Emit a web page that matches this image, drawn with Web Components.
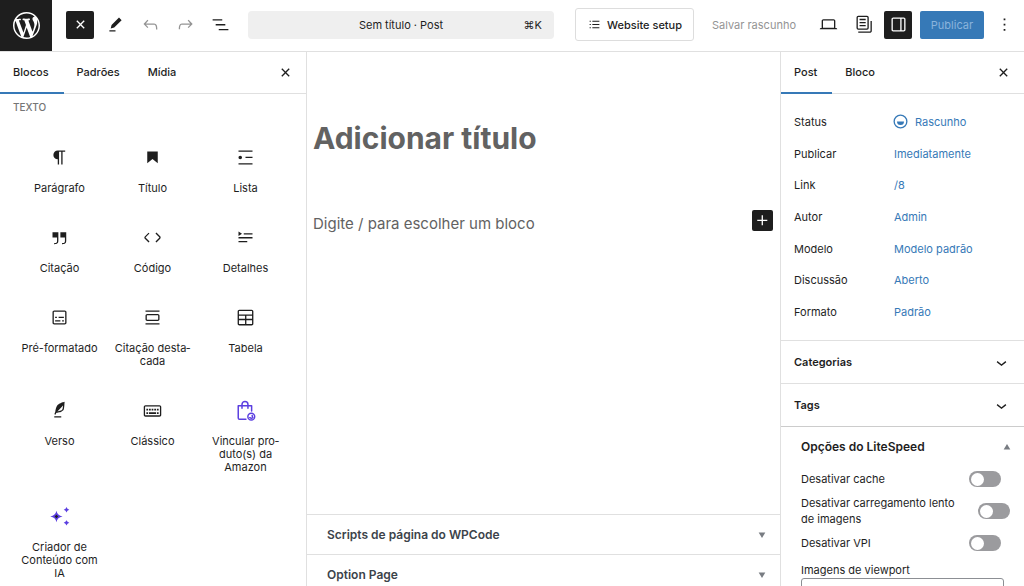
<!DOCTYPE html>
<html lang="pt-BR">
<head>
<meta charset="utf-8">
<meta name="viewport" content="width=device-width, initial-scale=1">
<title>Sem título · Post</title>
<style>
:root{--ink:#1e1e1e;--line:#e0e0e0;--blue:#3679b7;--grey:#949494}
html,body{margin:0;height:100%}
body{font:11px/16px Inter,"Liberation Sans",sans-serif;color:var(--ink);background:#fff;overflow:hidden}
</style>
</head>
<body>
<post-editor></post-editor>
<script>
const ICONS={
wp:'<path d="M20 10c0-5.51-4.49-10-10-10C4.48 0 0 4.49 0 10c0 5.52 4.48 10 10 10 5.51 0 10-4.48 10-10zM7.78 15.37L4.37 6.22c.55-.02 1.17-.08 1.17-.08.5-.06.44-1.13-.06-1.11 0 0-1.45.11-2.37.11-.18 0-.37 0-.58-.01C4.12 2.69 6.87 1.11 10 1.11c2.33 0 4.45.87 6.05 2.34-.68-.11-1.65.39-1.65 1.58 0 .74.45 1.36.9 2.1.35.61.55 1.36.55 2.46 0 1.49-1.4 5-1.4 5l-3.03-8.37c.54-.02.82-.17.82-.17.5-.05.44-1.25-.06-1.22 0 0-1.44.12-2.38.12-.87 0-2.33-.12-2.33-.12-.5-.03-.56 1.2-.06 1.22l.92.08 1.26 3.41zM17.41 10c.24-.64.74-1.87.43-4.25.7 1.29 1.05 2.71 1.05 4.25 0 3.29-1.73 6.24-4.4 7.78.97-2.59 1.94-5.2 2.92-7.78zM6.1 18.09C3.12 16.65 1.11 13.53 1.11 10c0-1.3.23-2.48.72-3.59C3.25 10.3 4.67 14.2 6.1 18.09zm4.03-6.63l2.58 6.98c-.86.29-1.76.45-2.71.45-.79 0-1.57-.11-2.29-.33.81-2.38 1.62-4.74 2.42-7.1z"/>',
close:'<path d="M12 13.06l3.712 3.713 1.061-1.06L13.061 12l3.712-3.712-1.06-1.06L12 10.938 8.288 7.227l-1.061 1.06L10.939 12l-3.712 3.712 1.06 1.061L12 13.061z"/>',
pencil:'<path d="m19 7-3-3-8.5 8.5-1 4 4-1L19 7Zm-7 11.5H5V20h7v-1.5Z"/>',
undo:'<path d="M18.3 11.7c-.6-.6-1.4-.9-2.3-.9H6.7l2.9-3.3-1.1-1-4.5 5L8.5 16l1-1-2.7-2.7H16c.5 0 .9.2 1.3.5 1 1 1 3.4 1 4.5v.3h1.5v-.2c0-1.5 0-4.3-1.5-5.7z"/>',
redo:'<path d="M15.6 6.5l-1.1 1 2.9 3.3H8c-.9 0-1.7.3-2.3.9-1.4 1.5-1.4 4.2-1.4 5.6v.2h1.5v-.3c0-1.1 0-3.5 1-4.5.3-.3.7-.5 1.3-.5h9.2L14.5 15l1.1 1.1 4.6-4.6-4.6-5z"/>',
overview:'<path d="M3 6h11v1.5H3V6Zm3.500 5.500h11V13h-11v-1.500ZM21 17H10v1.500h11V17Z"/>',
setup:'<path d="M8 5h13v1.800H8zM8 11.100h13v1.800H8zM8 17.200h13V19H8zM3 5h2.200v1.800H3zM3 11.100h2.200v1.800H3zM3 17.200h2.200V19H3z"/>',
desktop:'<path d="M20.5 16h-.7V8c0-1.1-.9-2-2-2H6.200c-1.100 0-2 .9-2 2v8h-.7c-.8 0-1.500.7-1.500 1.500h20c0-.8-.7-1.500-1.500-1.500zM5.700 8c0-.3.2-.5.5-.5h11.600c.3 0 .5.2.5.5v7.600H5.700V8z"/>',
pages:'<path d="M14.500 5.500h-7V7h7V5.500ZM7.500 9h7v1.500h-7V9Zm7 3.500h-7V14h7v-1.500Z"/><path d="M16 2H6a2 2 0 0 0-2 2v12a2 2 0 0 0 2 2h10a2 2 0 0 0 2-2V4a2 2 0 0 0-2-2ZM6 3.500h10a.5.5 0 0 1 .5.5v12a.5.5 0 0 1-.5.5H6a.5.5 0 0 1-.5-.5V4a.5.5 0 0 1 .5-.5Z" fill-rule="evenodd"/><path d="M20 8v11c0 .69-.31 1-.999 1H6v1.500h13.001c1.520 0 2.499-.982 2.499-2.500V8H20Z"/>',
drawer:'<path fill-rule="evenodd" d="M18 4H6c-1.100 0-2 .9-2 2v12c0 1.100.9 2 2 2h12c1.100 0 2-.9 2-2V6c0-1.100-.9-2-2-2zm-4 14.500H6c-.3 0-.5-.2-.5-.5V6c0-.3.2-.5.5-.5h8v13zm4.500-.5c0 .3-.2.5-.5.5h-2.500v-13H18c.3 0 .5.2.5.5v12z"/>',
more:'<path d="M13 19h-2v-2h2v2zm0-6h-2v-2h2v2zm0-6h-2V5h2v2z"/>',
paragraph:'<path d="m9.996 14v-.225l.004 0v6.225h1.500v-14.500h2.500v14.500h1.500v-14.500h3v-1.500h-8.504c-2.761 0-5 2.239-5 5 0 2.761 2.239 5 5 5z"/>',
heading:'<path d="M6 5V18.591L12 13.847L18 18.591V5H6Z"/>',
list:'<path d="M4 4v1.500h16V4H4zm8 8.500h8V11h-8v1.500zM4 20h16v-1.500H4V20zm4-8c0-1.100-.9-2-2-2s-2 .9-2 2 .9 2 2 2 2-.9 2-2z"/>',
quote:'<path d="M13 6v6h5.200v4c0 .8-.2 1.400-.5 1.700-.6.6-1.600.6-2.500.5h-.3v1.500h.5c1 0 2.300-.1 3.300-1 .6-.6 1-1.600 1-2.800V6H13zm-9 6h5.200v4c0 .8-.2 1.400-.5 1.700-.6.6-1.600.6-2.500.5h-.3v1.500h.5c1 0 2.300-.1 3.300-1 .6-.6 1-1.600 1-2.800V6H4v6z"/>',
code:'<path d="M20.800 10.700l-4.300-4.300-1.100 1.100 4.300 4.300c.1.1.1.3 0 .4l-4.300 4.300 1.100 1.100 4.300-4.300c.7-.8.7-1.900 0-2.600zM4.200 11.800l4.300-4.300-1-1-4.300 4.300c-.7.7-.7 1.800 0 2.500l4.300 4.300 1.100-1.100-4.300-4.300c-.2-.1-.2-.3-.1-.4z"/>',
details:'<path d="M4 16h10v1.500H4V16Zm0-4.500h16V13H4v-1.500ZM10 7h10v1.500H10V7Z"/><path d="m4 5.250 4 2.500-4 2.500v-5Z"/>',
preformatted:'<path fill-rule="evenodd" d="M18 4H6c-1.100 0-2 .9-2 2v12c0 1.100.9 2 2 2h12c1.100 0 2-.9 2-2V6c0-1.100-.9-2-2-2zm.5 14c0 .3-.2.5-.5.5H6c-.3 0-.5-.2-.5-.5V6c0-.3.2-.5.5-.5h12c.3 0 .5.2.5.5v12z"/><path d="M7 16.500h6V15H7v1.500zm4-4h6V11h-6v1.500zM9 11H7v1.500h2V11zm6 5.500h2V15h-2v1.500z"/>',
pullquote:'<path d="M18 8H6c-1.100 0-2 .9-2 2v4c0 1.100.9 2 2 2h12c1.100 0 2-.9 2-2v-4c0-1.100-.9-2-2-2zm.5 6c0 .3-.2.5-.5.5H6c-.3 0-.5-.2-.5-.5v-4c0-.3.2-.5.5-.5h12c.3 0 .5.2.5.5v4zM4 4v1.500h16V4H4zm0 16h16v-1.500H4V20z" fill-rule="evenodd"/>',
table:'<path fill-rule="evenodd" d="M19 3H5c-1.100 0-2 .9-2 2v14c0 1.100.9 2 2 2h14c1.100 0 2-.9 2-2V5c0-1.100-.9-2-2-2zM5 4.500h14c.3 0 .5.2.5.5v3.500h-15V5c0-.3.2-.5.5-.5zm8 5.500h6.500v3.500H13V10zm-1.500 3.500h-7V10h7v3.500zm-7 5.500v-4h7v4.500H5c-.3 0-.5-.2-.5-.5zm14.500.5h-6V15h6.500v4c0 .3-.2.5-.5.5z"/>',
verse:'<path d="M17.800 2l-.9.3c-.1 0-3.600 1-5.200 2.100C10 5.500 9.300 6.500 8.900 7.100c-.6.9-1.700 4.700-1.700 6.300l-.9 2.300c-.2.4 0 .8.4 1 .1 0 .2.1.3.1.3 0 .6-.2.7-.5l.6-1.500c.3 0 .7-.1 1.200-.2.7-.1 1.400-.3 2.200-.5.8-.2 1.600-.5 2.400-.8.7-.3 1.400-.7 1.900-1.200s.8-1.200 1-1.900c.2-.7.3-1.600.4-2.400.1-.8.1-1.700.2-2.500 0-.8.1-1.500.2-2.100V2zm-1.900 5.600c-.1.8-.2 1.500-.3 2.100-.2.6-.4 1-.6 1.300-.3.3-.8.6-1.400.9-.7.3-1.400.5-2.200.8-.6.2-1.300.3-1.800.4L15 7.500c.3-.3.6-.7 1-1.100 0 .4 0 .8-.1 1.200zM6 20h8v-1.500H6V20z"/>',
classic:'<path fill-rule="evenodd" d="M20 6H4c-1.100 0-2 .9-2 2v9c0 1.100.9 2 2 2h16c1.100 0 2-.9 2-2V8c0-1.100-.9-2-2-2zm.5 11c0 .3-.2.5-.5.5H4c-.3 0-.5-.2-.5-.5V8c0-.3.2-.5.5-.5h16c.3 0 .5.2.5.5v9zM10 10H8v2h2v-2zm-5 2h2v-2H5v2zm8-2h-2v2h2v-2zm-5 6h8v-2H8v2zm6-4h2v-2h-2v2zm3 0h2v-2h-2v2zm0 4h2v-2h-2v2zM5 16h2v-2H5v2z"/>',
bag:'<g fill="none" stroke="#5b3fe0" stroke-width="1.700" stroke-linejoin="round" stroke-linecap="round"><path d="M12.500 22H5.200a1.500 1.500 0 0 1-1.500-1.500V6.500h15.300v6M8 9.500V5a3.400 3.400 0 0 1 6.800 0v4.500"/><circle cx="18.600" cy="19" r="3.900"/><path d="M16.800 20.200q2 1.400 3.800 0M19.600 17.600l.3 1.500"/></g>',
sparkle:'<path fill="#5b3fe0" d="M8.500 5.500q1 5.500 7 6.500-6 1-7 6.500-1-5.500-7-6.500 6-1 7-6.500ZM20 1q.6 2.600 3.200 3.200Q20.600 4.800 20 7.400q-.6-2.600-3.200-3.200Q19.400 3.600 20 1ZM20 16.200q.8 2.200 3.200 3-2.400.8-3.200 3-.8-2.200-3.200-3 2.400-.8 3.200-3Z"/><path fill="#1e1e1e" d="M8.500 10 10.500 12l-2 2L6.500 12Z"/>',
plus:'<path d="M11 12.500V17.500H12.500V12.500H17.500V11H12.500V6H11V11H6V12.500H11Z"/>',
chevron:'<path d="M17.500 11.600L12 16l-5.500-4.400.9-1.200L12 14l4.500-3.600 1 1.200z"/>',
draft:'<path fill-rule="evenodd" d="M12 18.500a6.500 6.500 0 1 1 0-13 6.500 6.500 0 0 1 0 13ZM4 12a8 8 0 1 1 16 0 8 8 0 0 1-16 0Zm8 4a4 4 0 0 0 4-4H8a4 4 0 0 0 4 4Z"/>',
down:'<path d="M4 6h16L12 19z"/>',
up:'<path d="M4 18h16L12 5z"/>'
};
const RESET=`*{box-sizing:border-box}button{font:inherit;color:inherit;background:none;border:0;padding:0;margin:0;cursor:pointer}h1,h2,p,dl,dd,ul{margin:0;padding:0}`;
const define=(name,css,html)=>customElements.define(name,class extends HTMLElement{
  constructor(){super();this.attachShadow({mode:'open'});}
  connectedCallback(){
    const t=document.createElement('template');
    t.innerHTML=`<style>${RESET}${css}</style>${typeof html==='function'?html(this):html}`;
    this.shadowRoot.replaceChildren(t.content.cloneNode(true));
  }
});

define('ui-icon',`:host{display:block;flex:none;width:21px;height:21px}svg{display:block;width:100%;height:100%;fill:currentColor;overflow:visible}`,
  e=>`<svg viewBox="${e.getAttribute('name')==='wp'?'0 0 20 20':'0 0 24 24'}" aria-hidden="true">${ICONS[e.getAttribute('name')]}</svg>`);

define('icon-button',`:host{display:block;flex:none}
button{width:28px;height:28px;border-radius:2px;display:grid;place-items:center}
:host([dark]) button{background:var(--ink);color:#fff}
:host([small]) button{width:21px;height:21px}
button:disabled{color:var(--grey)}`,
  e=>`<button type="button" aria-label="${e.getAttribute('label')}" ${e.hasAttribute('off')?'disabled':''}><ui-icon name="${e.getAttribute('icon')}"></ui-icon></button>`);

define('editor-header',`:host{display:flex;height:52px;border-bottom:1px solid var(--line);align-items:stretch}
.logo{width:52px;background:var(--ink);color:#fff;display:grid;place-items:center}
.logo ui-icon{width:27px;height:27px}
.tools{display:flex;align-items:center;gap:7px;padding:0 14px;height:49px}
.center{flex:1;height:49px;display:flex;align-items:center}
.command{width:100%;height:28px;border-radius:4px;background:#efefef;display:grid;grid-template-columns:1fr auto 1fr;align-items:center;padding:0 12px}
.command kbd{font:inherit;justify-self:end}
.actions{display:flex;align-items:center;height:49px;padding-right:6px}
.setup{height:33px;border:1px solid #ddd;border-radius:3px;margin-left:21px;padding:0 11px 0 12px;display:flex;align-items:center;gap:6px;font-weight:500}
.setup ui-icon{width:13px;height:13px}
.save{color:var(--grey);min-width:120px}
.icons{display:flex;gap:7px}
.publish{height:28px;min-width:64px;margin:0 6px 0 8px;border-radius:2px;background:var(--blue);color:#8ab4dc}`,
`<a class="logo" href="#" aria-label="Ver posts"><ui-icon name="wp"></ui-icon></a>
<div class="tools"><icon-button dark icon="close" label="Alternar insersor"></icon-button><icon-button icon="pencil" label="Ferramentas"></icon-button><icon-button off icon="undo" label="Desfazer"></icon-button><icon-button off icon="redo" label="Refazer"></icon-button><icon-button icon="overview" label="Visão geral"></icon-button></div>
<div class="center"><button class="command" type="button"><span></span><span>Sem título · Post</span><kbd>⌘K</kbd></button></div>
<div class="actions"><button class="setup" type="button"><ui-icon name="setup"></ui-icon>Website setup</button>
<button class="save" type="button">Salvar rascunho</button>
<div class="icons"><icon-button icon="desktop" label="Ver"></icon-button><icon-button icon="pages" label="Modelos"></icon-button><icon-button dark icon="drawer" label="Configurações"></icon-button></div>
<button class="publish" type="button">Publicar</button><icon-button icon="more" label="Opções"></icon-button></div>`);

define('tab-bar',`:host{display:flex;align-items:center;height:42px;border-bottom:1px solid var(--line);padding-right:10px}
.tabs{display:flex;align-self:stretch;flex:1;margin-bottom:-1px}`,
`<div class="tabs" role="tablist"><slot></slot></div><icon-button small icon="close" label="Fechar"></icon-button>`);

define('tab-item',`:host{display:flex}
button{padding:0 15px 0 13px;font-size:11px;font-weight:500;border-bottom:2px solid transparent}
:host([selected]) button{border-color:var(--blue)}`,
e=>`<button type="button" role="tab" aria-selected="${e.hasAttribute('selected')}"><slot></slot></button>`);

define('block-item',`:host{display:block}
button{width:100%;padding:19px 6px 13px;display:flex;flex-direction:column;align-items:center;gap:14px;line-height:13px;font-size:11px;text-align:center;hyphens:manual}`,
e=>`<button type="button"><ui-icon name="${e.getAttribute('icon')}"></ui-icon><span><slot></slot></span></button>`);

define('block-inserter',`:host{display:block;border-right:1px solid var(--line);overflow:hidden}
h2{font-size:10px;line-height:14px;font-weight:500;color:#757575;padding:6px 13px 0}
.grid{display:grid;grid-template-columns:repeat(3,1fr);padding:14px 14px 0 13px}`,
`<tab-bar><tab-item selected>Blocos</tab-item><tab-item>Padrões</tab-item><tab-item>Mídia</tab-item></tab-bar>
<h2>TEXTO</h2><div class="grid">
<block-item icon="paragraph">Parágrafo</block-item><block-item icon="heading">Título</block-item><block-item icon="list">Lista</block-item>
<block-item icon="quote">Citação</block-item><block-item icon="code">Código</block-item><block-item icon="details">Detalhes</block-item>
<block-item icon="preformatted">Pré-formatado</block-item><block-item icon="pullquote">Citação desta&shy;cada</block-item><block-item icon="table">Tabela</block-item>
<block-item icon="verse">Verso</block-item><block-item icon="classic">Clássico</block-item><block-item icon="bag">Vincular pro&shy;duto(s) da Amazon</block-item>
<block-item icon="sparkle">Criador de Conteúdo com IA</block-item></div>`);

define('meta-box',`:host{display:block;border-top:1px solid var(--line)}
button{width:100%;height:39px;padding:0 13px 0 20px;display:flex;justify-content:space-between;align-items:center;font-size:12px;font-weight:600;color:#3c434a}
ui-icon{width:10px;height:10px;color:#787c82}`,
`<button type="button"><slot></slot><ui-icon name="down"></ui-icon></button>`);

define('editor-canvas',`:host{display:flex;flex-direction:column;overflow:hidden}
.doc{flex:1;padding:66px 7px 0 6px;color:#626262}
h1{font-size:30px;line-height:40px;font-weight:700;outline:0}
.row{display:flex;justify-content:space-between;align-items:flex-start;padding-top:52px}
.row p{font-size:15px;line-height:24px;padding-top:2px;outline:0}
.boxes{flex:none;height:72px}`,
`<div class="doc"><h1 contenteditable="true" role="textbox" aria-label="Adicionar título">Adicionar título</h1>
<div class="row"><p contenteditable="true" role="textbox" aria-label="Bloco vazio">Digite / para escolher um bloco</p><icon-button dark small icon="plus" label="Adicionar bloco"></icon-button></div></div>
<div class="boxes"><meta-box>Scripts de página do WPCode</meta-box><meta-box>Option Page</meta-box></div>`);

define('panel-title',`:host{display:block;border-top:1px solid var(--line)}
button{width:100%;height:42px;padding:0 12px 0 13px;display:flex;justify-content:space-between;align-items:center;font-size:11px;font-weight:600}`,
`<button type="button"><slot></slot><ui-icon name="chevron"></ui-icon></button>`);

define('switch-row',`:host{display:block}
label{display:flex;justify-content:space-between;align-items:center;gap:16px;padding-right:9px;font-size:11px;line-height:16px}
:host([wide]) label{padding-right:0}
input{appearance:none;flex:none;margin:0;width:32px;height:16px;border-radius:8px;background:#9b9b9e;display:flex;align-items:center;padding:0 2px}
input::before{content:"";width:13px;height:13px;border-radius:50%;background:#fff}`,
`<label><span><slot></slot></span><input type="checkbox" role="switch"></label>`);

define('post-settings',`:host{display:block;border-left:1px solid var(--line);overflow:hidden}
dl{display:grid;grid-template-columns:100px 1fr;grid-auto-rows:1fr;align-items:center;height:222px;margin:12px 13px;font-size:11px}
a{color:var(--blue);text-decoration:none;display:flex;align-items:center}
.status{gap:4px}
.status ui-icon{margin-left:-4px}
.lite{border-top:1px solid #ccc;padding:12px 12px 0 20px}
.head{width:100%;display:flex;justify-content:space-between;align-items:center;font-size:12px;font-weight:600;line-height:16px}
.head ui-icon{width:10px;height:10px;color:#787c82}
.rows{display:grid;gap:8px;padding:16px 2px 11px 0}
textarea{display:block;width:calc(100% - 8px);height:60px;border:1px solid #8c8f94;border-radius:3px;background:#fff;resize:none}`,
`<tab-bar><tab-item selected>Post</tab-item><tab-item>Bloco</tab-item></tab-bar>
<dl><dt>Status</dt><dd><a class="status" href="#"><ui-icon name="draft"></ui-icon>Rascunho</a></dd>
<dt>Publicar</dt><dd><a href="#">Imediatamente</a></dd><dt>Link</dt><dd><a href="#">/8</a></dd>
<dt>Autor</dt><dd><a href="#">Admin</a></dd><dt>Modelo</dt><dd><a href="#">Modelo padrão</a></dd>
<dt>Discussão</dt><dd><a href="#">Aberto</a></dd><dt>Formato</dt><dd><a href="#">Padrão</a></dd></dl>
<panel-title>Categorias</panel-title><panel-title>Tags</panel-title>
<div class="lite"><button class="head" type="button">Opções do LiteSpeed<ui-icon name="up"></ui-icon></button>
<div class="rows"><switch-row>Desativar cache</switch-row><switch-row wide>Desativar carregamento lento de imagens</switch-row><switch-row>Desativar VPI</switch-row></div>
<label for="vp">Imagens de viewport</label><textarea id="vp"></textarea></div>`);

define('post-editor',`:host{display:flex;flex-direction:column;height:100vh}
editor-header{flex:none}
main{flex:1;min-height:0;display:grid;grid-template-columns:307px minmax(0,1fr) 244px}`,
`<editor-header></editor-header><main><block-inserter></block-inserter><editor-canvas></editor-canvas><post-settings></post-settings></main>`);
</script>
</body>
</html>
